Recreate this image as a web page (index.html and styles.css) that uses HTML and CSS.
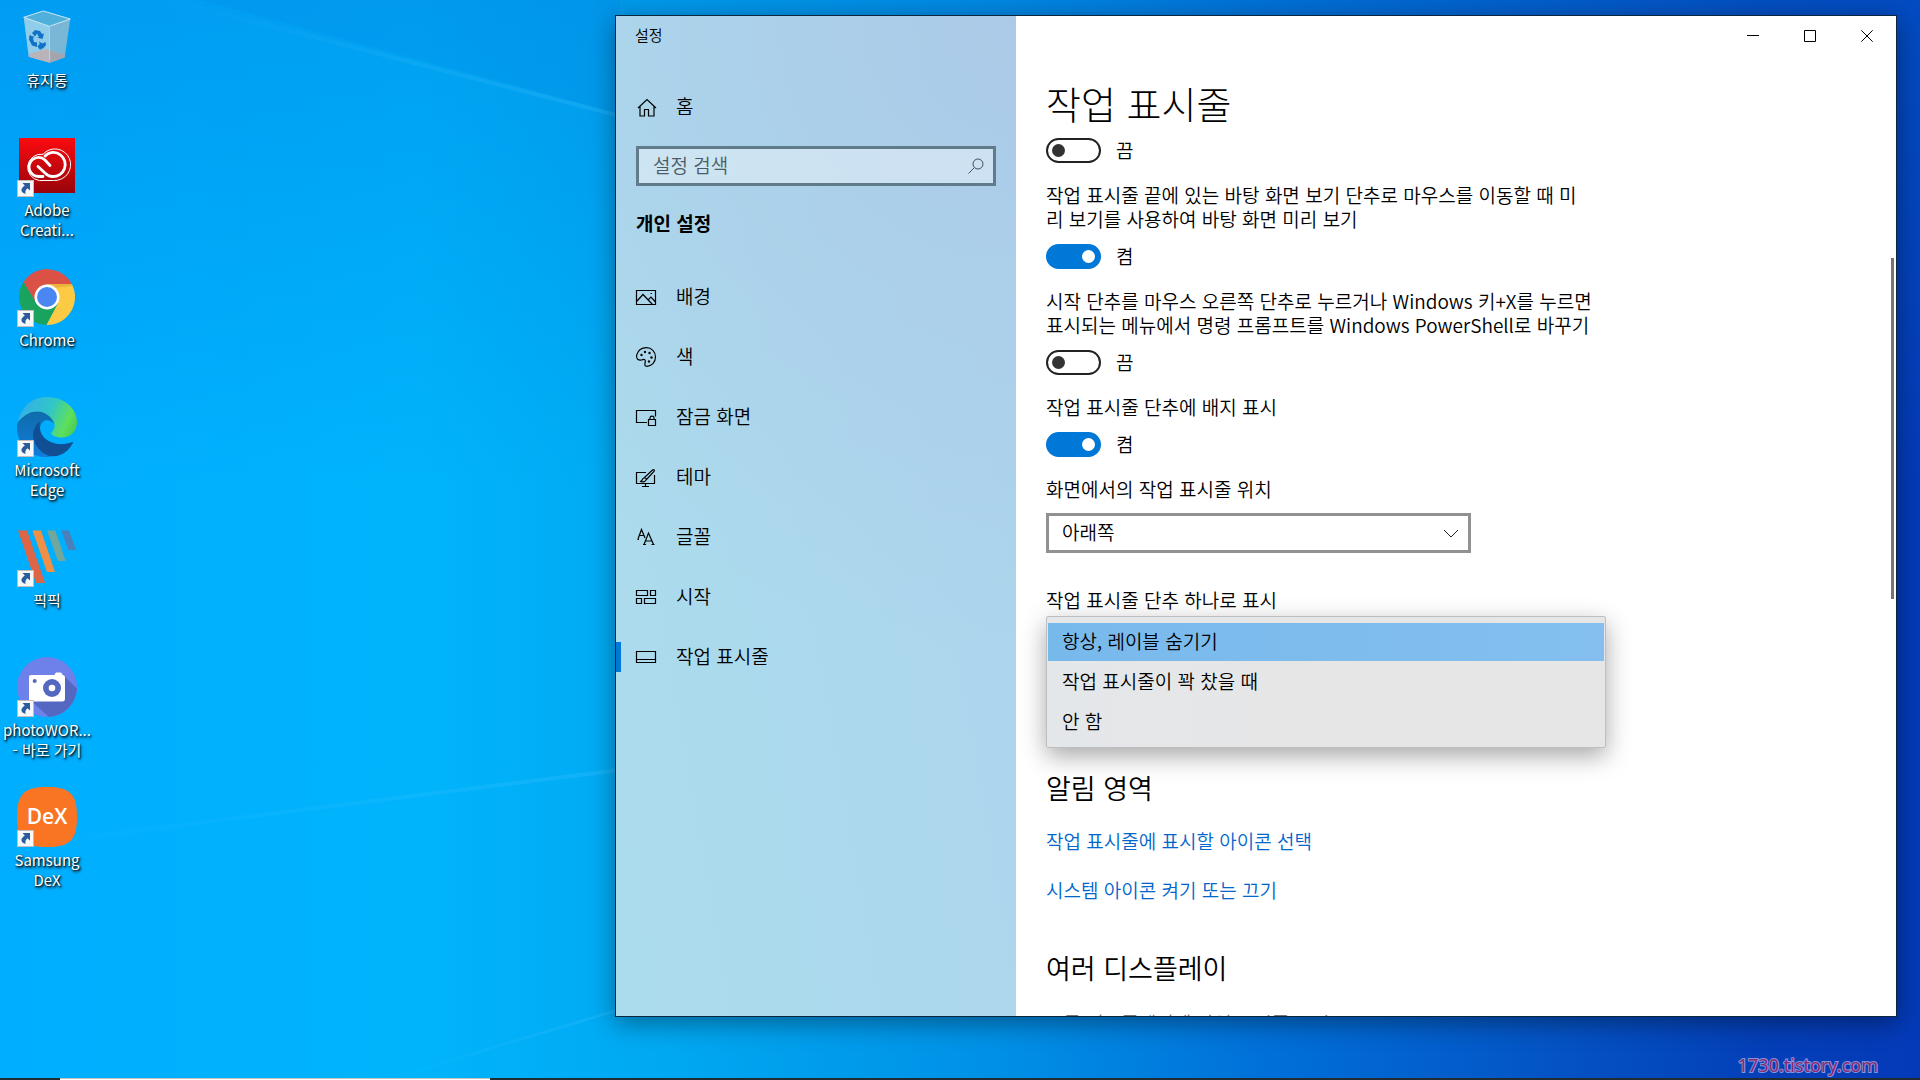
FILE: index.html
```
<!DOCTYPE html>
<html lang="ko">
<head>
    <meta charset="UTF-8">
    <meta name="viewport" content="width=device-width, initial-scale=1.0">
    <title>설정</title>
    <link rel="stylesheet" href="styles.css">
</head>
<body>
    <!-- light beams on the wallpaper -->
    <svg class="wallpaper" viewBox="0 0 1920 1080" preserveAspectRatio="none" aria-hidden="true">
        <defs>
            <linearGradient id="beam" x1="0" y1="0" x2="1" y2="0">
                <stop offset="0" stop-color="#5cc8ff" stop-opacity="0"/>
                <stop offset="1" stop-color="#5cc8ff" stop-opacity=".2"/>
            </linearGradient>
        </defs>
        <path d="M180 0L620 114V118L160 0z" fill="url(#beam)"/>
        <path d="M200 0L620 114V0z" fill="#0068d8" opacity=".1"/>
        <path d="M0 846L620 768V772L0 850z" fill="url(#beam)"/>
        <path d="M380 1080L620 1008V1011L390 1080z" fill="url(#beam)"/>
    </svg>

    <svg class="symbols" aria-hidden="true">
        <symbol id="shortcut" viewBox="0 0 17 17">
            <rect x=".5" y=".5" width="16" height="16" fill="#f7f8fa" stroke="#c9bdbb"/>
            <path d="M5.500 3h7.500v7.500l-2.500-2.300c-2 1.500-2.500 3-1.900 5.800C3.500 12.500 3 8.500 7.800 5.500z" fill="#2b5c9e"/>
        </symbol>
    </svg>

    <main class="desktop">
        <ul class="shortcuts">
            <li>
                <a href="#" class="shortcut">
                    <span class="shortcut-icon">
                        <svg viewBox="0 0 60 60">
                            <path d="M6.700 10.300L26.300 4l27 8-21 7.300z" fill="#4fb0dc"/>
                            <path d="M6.700 10.300l25.600 9 .4 36.400-21-6z" fill="#8fcdea"/>
                            <path d="M53.300 12l-21 7.300.4 36.400 15-5.400z" fill="#7ab6d6"/>
                            <path d="M12 47l17-5 18.700 6v2.300l-15 5.400-21-6z" fill="#b9b4b9"/>
                            <path d="M32.500 43.500v12.200l15-5.400.3-2.300z" fill="#a3a5ae"/>
                            <path d="M6.700 10.300L26.300 4l27 8-21 7.300z" fill="none" stroke="#c9e8f5"/>
                            <path d="M32.300 19.300l.4 34" stroke="#a9dcf2"/>
                            <g fill="#0f72c8">
                                <path d="M15 26l3-3 5 1 2 3 2-.5-1.500 5.500-5.500-1.500 2-.5-2-3.500-2 3z"/>
                                <path d="M12.500 28l5 2-1.500 1 1 4 3 .5v4.500l-5-1.500-3-6z"/>
                                <path d="M22 34.500l3.500 2 3-1.500.5 3-3 3.500-2.500.5v1.500l-3-4 2.500-3v1.500z"/>
                            </g>
                        </svg>
                    </span>
                    <span class="shortcut-label">휴지통</span>
                </a>
            </li>
            <li>
                <a href="#" class="shortcut">
                    <span class="shortcut-icon">
                        <svg viewBox="0 0 60 60">
                            <defs>
                                <linearGradient id="cc" x1="0" y1="0" x2="0" y2="1">
                                    <stop offset="0" stop-color="#fb0b0f"/>
                                    <stop offset="1" stop-color="#98040a"/>
                                </linearGradient>
                            </defs>
                            <rect x="2" y="1" width="56" height="55" fill="url(#cc)"/>
                            <g fill="none" stroke="#fff" stroke-linecap="round">
                                <path d="M22 43.500a13.200 13.200 0 1 1 4-26.200A15.800 15.800 0 1 1 37 43.500z" stroke-width="1"/>
                                <path d="M26 39.500h-4.500a9.500 9.500 0 1 1 6.500-16.500l5 5.500" stroke-width="2.800"/>
                                <path d="M28 19c4-4.500 11-5 15.500-1a12 12 0 0 1-8 21.500c-3 0-5-1-7-3l-7.500-7" stroke-width="2.800"/>
                            </g>
                        </svg>
                        <svg class="badge"><use href="#shortcut"/></svg>
                    </span>
                    <span class="shortcut-label">Adobe<br>Creati...</span>
                </a>
            </li>
            <li>
                <a href="#" class="shortcut">
                    <span class="shortcut-icon">
                        <svg viewBox="0 0 60 60">
                            <path d="M6.500 15A28 28 0 0 1 54.800 17H30L19 36z" fill="#dc5145"/>
                            <path d="M54.800 17A28 28 0 0 1 29.300 58L41 36 30 17z" fill="#fdcb43"/>
                            <path d="M6.500 15A28 28 0 0 0 29.300 58L41 36H19z" fill="#19a35c"/>
                            <path d="M30 17h24.800l.7 2-20 2z" fill="#d99a35" opacity=".5"/>
                            <circle cx="30" cy="30" r="12.500" fill="#fff"/>
                            <circle cx="30" cy="30" r="10" fill="#4b87f2"/>
                        </svg>
                        <svg class="badge"><use href="#shortcut"/></svg>
                    </span>
                    <span class="shortcut-label">Chrome</span>
                </a>
            </li>
            <li>
                <a href="#" class="shortcut">
                    <span class="shortcut-icon">
                        <svg viewBox="0 0 60 60">
                            <defs>
                                <linearGradient id="edgeTop" x1="0" y1=".3" x2="1" y2=".6">
                                    <stop offset="0" stop-color="#35aee8"/>
                                    <stop offset=".5" stop-color="#30c6c8"/>
                                    <stop offset=".85" stop-color="#5ee05c"/>
                                    <stop offset="1" stop-color="#4fcf55"/>
                                </linearGradient>
                                <linearGradient id="edgeBody" x1="0" y1="0" x2="0" y2="1">
                                    <stop offset="0" stop-color="#0f6cab"/>
                                    <stop offset="1" stop-color="#107cdb"/>
                                </linearGradient>
                            </defs>
                            <path d="M1 25C8 13 24 10 33 19c3 3 4.500 6 4.300 8-5-6-13-5-14.300 4 0 8 6 14 14 20L33 60C14 62 0 48 0 30c0-2 .3-3.500 1-5z" fill="url(#edgeBody)"/>
                            <path d="M23 24.500c-8 6-9 17-3 25C26 58 35 61.500 43 58c6-2.500 10-6.500 13-12.300.2-.7-.3-1-1-.7C43 50 27 46 23.300 34c-1-3.500-.8-6.500-.3-9.500z" fill="#124e94"/>
                            <path d="M1.300 24.700C4 10 15 0 30 0c18 0 30 12 30 25 0 10-7 15.500-15.300 15.500-6 0-12-2.500-10-5.500 2.500-2.500 4-6 2-10C31 13 14 9 1.300 24.700z" fill="url(#edgeTop)"/>
                        </svg>
                        <svg class="badge"><use href="#shortcut"/></svg>
                    </span>
                    <span class="shortcut-label">Microsoft<br>Edge</span>
                </a>
            </li>
            <li>
                <a href="#" class="shortcut">
                    <span class="shortcut-icon">
                        <svg viewBox="0 0 60 60">
                            <path d="M1 3.500h9L28 56h-9z" fill="#de6545"/>
                            <path d="M15.500 3.500h8.500L38 45h-8z" fill="#ef9047"/>
                            <path d="M30 3.500h8.300L48.700 34H41z" fill="#73a79b"/>
                            <path d="M44.300 3.500H52L59 23h-7.700z" fill="#4c80ba"/>
                        </svg>
                        <svg class="badge"><use href="#shortcut"/></svg>
                    </span>
                    <span class="shortcut-label">픽픽</span>
                </a>
            </li>
            <li>
                <a href="#" class="shortcut">
                    <span class="shortcut-icon">
                        <svg viewBox="0 0 60 60">
                            <circle cx="30" cy="30" r="30" fill="#6e81eb"/>
                            <path d="M47 19l13 12.500A30 30 0 0 1 32 60L13 43z" fill="#5568c1"/>
                            <path d="M14 18h23.500c.5-2 1.500-2.500 3-2.500h2c1.500 0 2.500.5 3 2.500 1.500 0 2.500 1 2.500 2.500V42c0 1.500-1 2.500-2.500 2.500H14.500C13 44.500 12 43.500 12 42V20c0-1.200.8-2 2-2z" fill="#fff"/>
                            <circle cx="35" cy="31" r="9" fill="#5568c1"/>
                            <circle cx="35" cy="31" r="3.300" fill="#fff"/>
                            <circle cx="17.700" cy="24" r="2" fill="#5568c1"/>
                        </svg>
                        <svg class="badge"><use href="#shortcut"/></svg>
                    </span>
                    <span class="shortcut-label">photoWOR...<br>- 바로 가기</span>
                </a>
            </li>
            <li>
                <a href="#" class="shortcut">
                    <span class="shortcut-icon">
                        <svg viewBox="0 0 60 60">
                            <path d="M30 0c23 0 30 7 30 30s-7 30-30 30S0 53 0 30 7 0 30 0z" fill="#f97523"/>
                            <text class="dex-text" x="30" y="37" text-anchor="middle">DeX</text>
                        </svg>
                        <svg class="badge"><use href="#shortcut"/></svg>
                    </span>
                    <span class="shortcut-label">Samsung<br>DeX</span>
                </a>
            </li>
        </ul>

        <section class="window">
            <aside class="sidebar">
                <div class="window-title">설정</div>
                <a href="#" class="nav-item home">
                    <svg class="nav-icon" viewBox="0 0 20 20"><path d="M2 11l9-8.500 9 8.500M4 9.500V19h4.500v-6.500h4V19H18V9.500"/></svg>
                    <span>홈</span>
                </a>
                <div class="search-box">
                    <input type="search" placeholder="설정 검색" aria-label="설정 검색">
                    <svg viewBox="0 0 16 16"><circle cx="10" cy="6" r="5"/><path d="M6.500 9.500L.5 15.500"/></svg>
                </div>
                <h2 class="sidebar-title">개인 설정</h2>
                <nav>
                    <a href="#" class="nav-item">
                        <svg class="nav-icon" viewBox="0 0 20 20"><path d="M.5 3.500h19v14H.5zM1 14l6-6.500 9.500 10M12 13l3-3 4.500 5M14.500 6.500h1.500"/></svg>
                        <span>배경</span>
                    </a>
                    <a href="#" class="nav-item">
                        <svg class="nav-icon" viewBox="0 0 20 20">
                            <path d="M.7 8C2 3.500 6 .7 10.500.7c5 0 9 4 9 9.300s-4 9.300-8.500 9.300c-2 0-2.500-1-2-3 .7-2.500.7-3-.5-3.700-1-.6-1.800.2-3 .4C2 13.500-.2 11.500.7 8z"/>
                            <g class="dots"><circle cx="5.500" cy="8" r="1.200"/><circle cx="9" cy="5" r="1.200"/><circle cx="13.500" cy="6" r="1.200"/><circle cx="15.500" cy="10.500" r="1.200"/><circle cx="13" cy="14.500" r="1.200"/></g>
                        </svg>
                        <span>색</span>
                    </a>
                    <a href="#" class="nav-item">
                        <svg class="nav-icon" viewBox="0 0 20 20"><path d="M11 15.500H.5v-12h19v6M12.500 12.500h7v6h-7zM14 12.500v-1.800c0-2.200 4-2.200 4 0v1.800"/></svg>
                        <span>잠금 화면</span>
                    </a>
                    <a href="#" class="nav-item">
                        <svg class="nav-icon" viewBox="0 0 20 20"><path d="M10 5.500H.5v11h18V8M9.500 16.500v2.500M6 19.500h7M4 14.500c2 0 2-1.500 3-3 1-1.300 3.500-.5 3.300 1-.3 2-3.300 3-6.300 2zM8.500 10.500l8-7.500c1.500-1 2.500 0 1.500 1.500l-7.500 8"/></svg>
                        <span>테마</span>
                    </a>
                    <a href="#" class="nav-item">
                        <svg class="nav-icon" viewBox="0 0 20 20"><path d="M2 12L5.500 2.500 9 11M3.500 8.500H8M1.500 12.500H3M8 17.500l4.500-11.500 5 11.500M9.500 14h6.500M7 17.500h3M15.500 17.500h3"/></svg>
                        <span>글꼴</span>
                    </a>
                    <a href="#" class="nav-item">
                        <svg class="nav-icon" viewBox="0 0 20 20"><path d="M.5 3.500h11v5H.5zM14.500 3.500h5v5h-5zM.5 11.500h5v5h-5zM8.500 11.500h11v5h-11z"/></svg>
                        <span>시작</span>
                    </a>
                    <a href="#" class="nav-item active">
                        <svg class="nav-icon" viewBox="0 0 20 20"><path d="M.5 4.500h19v11H.5zM.5 12.500h19"/></svg>
                        <span>작업 표시줄</span>
                    </a>
                </nav>
            </aside>

            <div class="content">
                <div class="caption-buttons">
                    <button type="button" aria-label="최소화"><svg viewBox="0 0 12 12"><path d="M0 5.500h12"/></svg></button>
                    <button type="button" aria-label="최대화"><svg viewBox="0 0 12 12"><path d="M.5.5h11v11H.5z"/></svg></button>
                    <button type="button" aria-label="닫기"><svg viewBox="0 0 12 12"><path d="M.3.3l11.400 11.400M11.700.3L.3 11.700"/></svg></button>
                </div>

                <div class="page">
                    <h1>작업 표시줄</h1>

                    <label class="toggle first">
                        <input type="checkbox" role="switch">
                        <span>끔</span>
                    </label>

                    <p class="setting-text" id="peek">작업 표시줄 끝에 있는 바탕 화면 보기 단추로 마우스를 이동할 때 미<br>리 보기를 사용하여 바탕 화면 미리 보기</p>
                    <label class="toggle">
                        <input type="checkbox" role="switch" aria-describedby="peek" checked>
                        <span>켬</span>
                    </label>

                    <p class="setting-text" id="powershell">시작 단추를 마우스 오른쪽 단추로 누르거나 Windows 키+X를 누르면<br>표시되는 메뉴에서 명령 프롬프트를 Windows PowerShell로 바꾸기</p>
                    <label class="toggle">
                        <input type="checkbox" role="switch" aria-describedby="powershell">
                        <span>끔</span>
                    </label>

                    <p class="setting-text" id="badges">작업 표시줄 단추에 배지 표시</p>
                    <label class="toggle">
                        <input type="checkbox" role="switch" aria-describedby="badges" checked>
                        <span>켬</span>
                    </label>

                    <label class="setting-text" for="position">화면에서의 작업 표시줄 위치</label>
                    <div class="select-box">
                        <select id="position">
                            <option>아래쪽</option>
                        </select>
                        <svg viewBox="0 0 16 10"><path d="M1 1l7 7 7-7"/></svg>
                    </div>

                    <label class="setting-text combine" for="combine">작업 표시줄 단추 하나로 표시</label>
                    <select class="open-list" id="combine" size="3">
                        <option selected>항상, 레이블 숨기기</option>
                        <option>작업 표시줄이 꽉 찼을 때</option>
                        <option>안 함</option>
                    </select>

                    <h2>알림 영역</h2>
                    <a href="#" class="page-link">작업 표시줄에 표시할 아이콘 선택</a>
                    <a href="#" class="page-link">시스템 아이콘 켜기 또는 끄기</a>

                    <h2 class="displays">여러 디스플레이</h2>
                    <p class="setting-text disabled">모든 디스플레이에 작업 표시줄 표시</p>
                </div>
                <div class="scroll-thumb"></div>
            </div>
        </section>
    </main>

    <div class="watermark">1730.tistory.com</div>
    <footer class="taskbar"><div class="taskbar-search"></div></footer>
</body>
</html>
```

FILE: styles.css
```
* {
    margin: 0;
    padding: 0;
    box-sizing: border-box;
}

body {
    font-family: "Noto Sans CJK KR", sans-serif;
    font-size: 19px;
    font-weight: 350;
    line-height: 24px;
    color: #000;
    height: 100vh;
    overflow: hidden;
    position: relative;
    display: flex;
    flex-direction: column;
    background:
        linear-gradient(to bottom, rgba(0, 115, 215, 0.3), rgba(0, 115, 215, 0) 45%),
        linear-gradient(to right, #00aeff 0%, #00b4fc 22%, #00a9f2 34%, #0090e6 52%, #0070d8 66%, #0455c6 80%, #043fb8 92%, #043ab8 100%);
}

a {
    color: inherit;
    text-decoration: none;
}

input,
select,
button,
option {
    font: inherit;
    color: inherit;
}

.wallpaper {
    position: absolute;
    inset: 0;
    width: 100%;
    height: 100%;
}

.symbols {
    position: absolute;
    width: 0;
    height: 0;
}

.desktop {
    flex: 1;
    min-height: 0;
    display: flex;
    justify-content: space-between;
    padding: 15px 23px 61px 0;
    position: relative;
}

/* desktop shortcuts */

.shortcuts {
    list-style: none;
    width: 94px;
    margin-top: -8px;
    display: grid;
    grid-auto-rows: 130px;
}

.shortcut {
    display: flex;
    flex-direction: column;
    align-items: center;
    gap: 3px;
    color: #fff;
    font-size: 15px;
    font-weight: 400;
    line-height: 20px;
    text-align: center;
    text-shadow: 1px 1px 2px #000, 1px 2px 3px rgba(0, 0, 0, 0.7);
}

.shortcut-icon {
    position: relative;
    width: 60px;
    height: 60px;
}

.shortcut-icon svg {
    display: block;
    width: 60px;
    height: 60px;
}

.shortcut-icon .badge {
    position: absolute;
    left: 0;
    bottom: 0;
    width: 17px;
    height: 17px;
}

.shortcut-label {
    white-space: nowrap;
}

.dex-text {
    font-family: "Open Sans", sans-serif;
    font-size: 21px;
    font-weight: 600;
    fill: #fff;
    text-shadow: none;
}

/* settings window */

.window {
    width: calc(100% - 521px - 94px);
    display: flex;
    border: 1px solid #0b2740;
    box-shadow: 0 6px 24px rgba(0, 0, 0, 0.4);
    background: #fff;
}

.sidebar {
    flex: 0 0 400px;
    background:
        radial-gradient(circle at 100% 0, rgba(171, 200, 230, 0.8), rgba(171, 200, 230, 0) 60%),
        linear-gradient(80deg, #abdcec 0%, #acd9ed 40%, #acd4ed 100%);
}

.window-title {
    height: 40px;
    padding-left: 19px;
    font-size: 15px;
    line-height: 38px;
}

.nav-item {
    position: relative;
    display: flex;
    align-items: center;
    gap: 20px;
    height: 60px;
    padding-left: 20px;
}

.nav-item.home {
    margin-top: 21px;
}

.nav-item.active::before {
    content: "";
    position: absolute;
    left: 0;
    top: 15px;
    width: 5px;
    height: 30px;
    background: #0078d7;
}

.nav-item span,
.toggle span {
    padding-bottom: 2px;
}

.nav-icon {
    width: 20px;
    height: 20px;
    fill: none;
    stroke: #000;
    stroke-width: 1.2;
    overflow: visible;
}

.nav-icon .dots {
    fill: #000;
    stroke: none;
}

.search-box {
    display: flex;
    align-items: center;
    height: 40px;
    margin: 9px 20px 25px;
    padding-right: 9px;
    border: 3px solid #607b89;
    background: rgba(255, 255, 255, 0.4);
}

.search-box input {
    flex: 1;
    min-width: 0;
    height: 32px;
    padding: 0 0 4px 14px;
    border: 0;
    outline: 0;
    background: none;
}

.search-box input::placeholder {
    color: #4a5c66;
}

.search-box svg {
    width: 16px;
    height: 16px;
    fill: none;
    stroke: #40525c;
}

.sidebar-title {
    padding-left: 20px;
    margin-bottom: 32px;
    font-size: 19px;
    font-weight: 700;
}

.content {
    flex: 1;
    min-width: 0;
    position: relative;
    overflow: hidden;
}

.caption-buttons {
    display: flex;
    justify-content: flex-end;
    height: 36px;
}

.caption-buttons button {
    width: 57px;
    padding-left: 2px;
    padding-right: 4px;
    border: 0;
    background: none;
}

.caption-buttons svg {
    width: 12px;
    height: 12px;
    fill: none;
    stroke: #000;
}

.page {
    height: 0;
    padding: 27px 30px 0;
}

.page h1 {
    font-size: 38px;
    font-weight: 300;
    line-height: 48px;
}

.page h2 {
    margin-top: 22px;
    font-size: 27px;
    font-weight: 350;
    line-height: 36px;
}

.page h2.displays {
    margin-top: 48px;
}

.setting-text {
    display: block;
    margin-top: 20px;
}

.setting-text.combine {
    margin-top: 35px;
}

.setting-text.disabled {
    margin-top: 25px;
    color: #777;
}

.toggle {
    display: flex;
    align-items: center;
    gap: 15px;
    width: 100px;
    height: 25px;
    margin-top: 13px;
}

.toggle.first {
    margin-top: 11px;
}

.toggle input {
    appearance: none;
    display: flex;
    align-items: center;
    width: 55px;
    height: 25px;
    padding: 0 4px;
    border: 2px solid #222;
    border-radius: 13px;
}

.toggle input::before {
    content: "";
    width: 13px;
    height: 13px;
    border-radius: 50%;
    background: #333;
}

.toggle input:checked {
    justify-content: flex-end;
    border-color: #0078d7;
    background: #0078d7;
}

.toggle input:checked::before {
    background: #fff;
}

.select-box {
    position: relative;
    width: 425px;
    margin-top: 12px;
}

.select-box select {
    appearance: none;
    display: block;
    width: 100%;
    height: 40px;
    padding: 0 40px 2px 13px;
    border: 3px solid #919191;
    background: #fff;
}

.select-box svg {
    position: absolute;
    right: 12px;
    top: 16px;
    width: 16px;
    height: 10px;
    fill: none;
    stroke: #222;
    pointer-events: none;
}

.open-list {
    appearance: none;
    display: block;
    width: 560px;
    height: 132px;
    margin-top: 4px;
    padding: 6px 1px;
    overflow: hidden;
    border: 1px solid #bcbec0;
    outline: 0;
    background: linear-gradient(to right, #e4e7ea, #e6e6e6 50%);
    box-shadow: 0 8px 24px rgba(0, 0, 0, 0.35);
}

.open-list option {
    height: 38px;
    margin-bottom: 2px;
    padding: 4px 14px 0;
    color: #000;
}

.open-list option:checked {
    color: #000;
    background: linear-gradient(to right, #78b9ec, #84bfef);
}

.page-link {
    display: block;
    width: fit-content;
    margin-top: 23px;
    color: #0066cc;
}

.page-link + .page-link {
    margin-top: 25px;
}

.scroll-thumb {
    position: absolute;
    right: 2px;
    top: 24.2%;
    width: 3px;
    height: 34.1%;
    background: #767676;
}

.watermark {
    position: absolute;
    right: 42px;
    bottom: 3px;
    font-family: "Noto Sans", sans-serif;
    font-size: 18px;
    font-weight: 400;
    color: #8c2672;
    -webkit-text-stroke: 2px #8396dc;
    paint-order: stroke fill;
}

.taskbar {
    position: relative;
    height: 2px;
    padding-left: 60px;
    background: #1f2c33;
}

.taskbar-search {
    width: 430px;
    height: 2px;
    background: #fff;
    border-top: 1px solid #c9c0bd;
}
```
